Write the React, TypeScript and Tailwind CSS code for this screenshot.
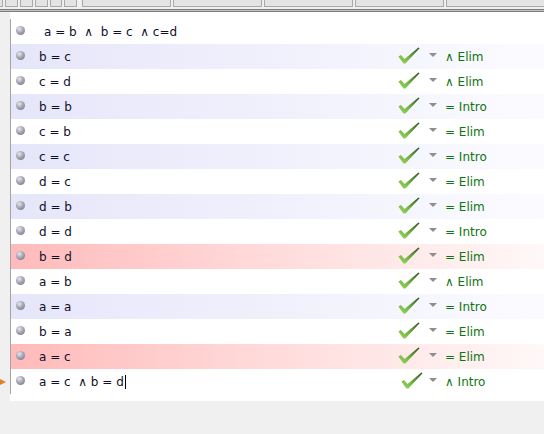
import React from "react";

type Line = {
  formula: string;
  rule?: string;
  tone?: "lav" | "red";
};

const lines: Line[] = [
  { formula: "a = b  ∧  b = c  ∧ c=d" },
  { formula: "b = c", rule: "∧ Elim", tone: "lav" },
  { formula: "c = d", rule: "∧ Elim" },
  { formula: "b = b", rule: "= Intro", tone: "lav" },
  { formula: "c = b", rule: "= Elim" },
  { formula: "c = c", rule: "= Intro", tone: "lav" },
  { formula: "d = c", rule: "= Elim" },
  { formula: "d = b", rule: "= Elim", tone: "lav" },
  { formula: "d = d", rule: "= Intro" },
  { formula: "b = d", rule: "= Elim", tone: "red" },
  { formula: "a = b", rule: "∧ Elim" },
  { formula: "a = a", rule: "= Intro", tone: "lav" },
  { formula: "b = a", rule: "= Elim" },
  { formula: "a = c", rule: "= Elim", tone: "red" },
  { formula: "a = c  ∧ b = d", rule: "∧ Intro" },
];

function Check({ id }: { id: string }) {
  return (
    <svg width="22" height="17" viewBox="0 0 22 17" className="shrink-0">
      <defs>
        <linearGradient id={id} x1="0" y1="1" x2="1" y2="0">
          <stop offset="0" stopColor="#9fd866" />
          <stop offset="0.4" stopColor="#76b844" />
          <stop offset="1" stopColor="#2e5022" />
        </linearGradient>
      </defs>
      <path
        d="M0.3 9.6 L2.9 8 L6.6 12 L20.4 0.4 L21.6 1.3 L7.4 16.6 L5.4 16.6 Z"
        fill={`url(#${id})`}
      />
    </svg>
  );
}

function Bullet() {
  return (
    <span className="ml-[5px] -mt-[2px] block h-[9px] w-[9px] shrink-0 rounded-full bg-[radial-gradient(circle_at_38%_32%,#e8e8f0_0%,#a6a6b4_45%,#6a6a7a_100%)]" />
  );
}

function Toolbar() {
  const small = [
    "w-[3px] border-l-0",
    "w-[13px]",
    "w-[13px]",
    "w-[13px]",
    "w-[12px]",
    "w-[13px]",
  ];
  return (
    <div className="flex h-[9px] items-start gap-[2px] overflow-hidden">
      {small.map((c, i) => (
        <div key={i} className={`h-[7px] shrink-0 border border-t-0 border-[#a9a9a9] bg-[#e4e4e4] ${c}`} />
      ))}
      <div className="w-[1px]" />
      <div className="h-[7px] w-[89px] shrink-0 border border-t-0 border-[#a9a9a9] bg-[#e4e4e4]" />
      <div className="h-[7px] w-[89px] shrink-0 border border-t-0 border-[#a9a9a9] bg-[#e4e4e4]" />
      <div className="h-[7px] w-[89px] shrink-0 border border-t-0 border-[#a9a9a9] bg-[#e4e4e4]" />
      <div className="h-[7px] w-[89px] shrink-0 border border-t-0 border-[#a9a9a9] bg-[#e4e4e4]" />
      <div className="h-[7px] flex-1 border border-t-0 border-r-0 border-[#a9a9a9] bg-[#e4e4e4]" />
    </div>
  );
}

export default function App() {
  return (
    <div
      className="flex h-[434px] w-[544px] flex-col overflow-hidden bg-[#f0f0f0] text-[12px] text-[#10102a]"
      style={{ fontFamily: '"DejaVu Sans", Verdana, sans-serif' }}
    >
      <Toolbar />
      {/* separator */}
      <div className="h-[3px] border-y border-[#7c7c7c] bg-[#c4c4c4]" />

      <div className="ml-[10px] h-[7px] bg-white" />

      {lines.map((line, i) => {
        const last = i === lines.length - 1;
        const bg =
          line.tone === "lav"
            ? "bg-linear-to-r from-[#e6e6fa] to-[#fbfbff]"
            : line.tone === "red"
            ? "bg-linear-to-r from-[#ffbaba] via-[#ffdcdc] to-[#fff8f8]"
            : "bg-white";
        return (
          <div key={i} className="flex h-[25px]">
            <div className="flex w-[10px] shrink-0 items-center">
              {last && (
                <span className="block h-0 w-0 border-y-[3px] border-l-[6px] border-y-transparent border-l-[#e2801e]" />
              )}
            </div>
            <div className="flex flex-1 items-center border-l border-[#a4a4a4] bg-white">
              <div className={`flex h-full flex-1 items-center ${bg}`}>
                <Bullet />
                <span className={`${i === 0 ? "ml-[19px]" : "ml-[14px]"} flex-1 whitespace-pre leading-none`}>
                  {line.formula}
                  {last && <span className="ml-[1px] inline-block h-[14px] w-[1px] align-[-3px] bg-black" />}
                </span>
                {line.rule && (
                  <div className="flex w-[146px] shrink-0 items-center">
                    <div className={`${last ? "ml-[3px]" : ""} -mt-[2px] flex`}>
                      <Check id={`chk${i}`} />
                    </div>
                    <span
                      className={`${last ? "ml-[6px]" : "ml-[9px]"} -mt-[3px] block h-0 w-0 border-x-[4px] border-t-[4px] border-x-transparent border-t-[#8e8e8e]`}
                    />
                    <span className="ml-[8px] whitespace-pre text-[#0f7510] leading-none">{line.rule}</span>
                  </div>
                )}
              </div>
            </div>
          </div>
        );
      })}

      <div className="ml-[10px] h-[7px] bg-white" />
    </div>
  );
}
